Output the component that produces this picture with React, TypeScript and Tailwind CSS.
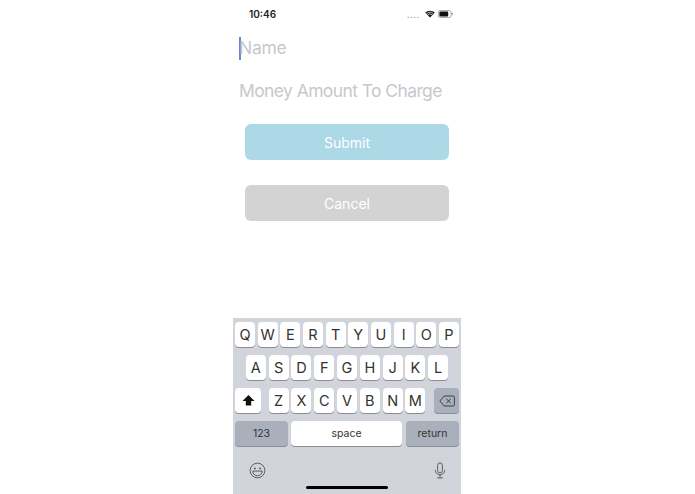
import React from "react";

function Key({ c }: { c: string }) {
  return (
    <div className="w-[20px] h-[25px] bg-white rounded-[4px] shadow-[0_1px_0_#8a8d94] flex items-center justify-center text-[14.5px] text-[#333] shrink-0">
      {c}
    </div>
  );
}

export default function App() {
  return (
    <div className="w-[695px] h-[494px] bg-white overflow-hidden flex justify-center font-['Inter','Liberation_Sans',sans-serif]">
      <div className="w-[228px] h-[494px] flex flex-col ml-[-1px]">
        <div className="h-[28px] flex items-center justify-between pl-[16px] pr-[8px]">
          <span className="text-[10px] font-semibold text-[#222]">10:46</span>
          <div className="flex items-center gap-[3px]">
            <span className="text-[7px] leading-none text-[#999] tracking-[0.9px] mt-[2px] font-bold mr-[2px]">....</span>
            <svg width="10" height="8" viewBox="0 0 10 8">
              <path d="M5 7.6 L0.2 2.6 A7 7 0 0 1 9.8 2.6 Z" fill="#111" />
              <path d="M1.8 3.4 A5 5 0 0 1 8.2 3.4" stroke="#fff" strokeWidth="0.7" fill="none" />
              <path d="M3 4.8 A3 3 0 0 1 7 4.8" stroke="#fff" strokeWidth="0.7" fill="none" />
            </svg>
            <svg width="15" height="8" viewBox="0 0 15 8">
              <rect x="0.4" y="0.5" width="12.6" height="7" rx="1.8" stroke="#888" strokeWidth="0.7" fill="none" />
              <rect x="1.4" y="1.5" width="8.8" height="5" rx="1" fill="#111" />
              <rect x="13.6" y="2.8" width="1" height="2.4" rx="0.5" fill="#888" />
            </svg>
          </div>
        </div>

        <div className="h-[42px] flex items-center pl-[6px] mt-[-1px]">
          <div className="w-[1.5px] h-[23px] bg-[#6f83d6] mt-[1px]"></div>
          <span className="text-[17.5px] tracking-[-0.3px] text-[#c8c8cc] ml-[-1.5px] mt-[1px]">Name</span>
        </div>
        <div className="h-[42px] flex items-center pl-[6px] mt-[1px]">
          <span className="text-[17.5px] tracking-[-0.6px] text-[#c8c8cc] whitespace-nowrap mt-[1px]">Money Amount To Charge</span>
        </div>

        <div className="mt-[12px] flex flex-col gap-[25px] px-[12px]">
          <div className="h-[36px] w-[204px] rounded-[6px] bg-[#add8e6] flex items-center justify-center text-white text-[14px]">Submit</div>
          <div className="h-[36px] w-[204px] rounded-[6px] bg-[#d3d3d3] flex items-center justify-center text-white text-[14px]">Cancel</div>
        </div>

        <div className="flex-1"></div>

        <div className="h-[176px] bg-[#d1d4da] flex flex-col pt-[4px] px-[2px] relative">
          <div className="flex justify-between">
            {"QWERTYUIOP".split("").map((c) => <Key key={c} c={c} />)}
          </div>
          <div className="flex justify-center gap-[2.8px] mt-[8px]">
            {"ASDFGHJKL".split("").map((c) => <Key key={c} c={c} />)}
          </div>
          <div className="flex justify-between mt-[8px]">
            <div className="w-[26px] h-[25px] bg-white rounded-[4px] shadow-[0_1px_0_#8a8d94] flex items-center justify-center">
              <svg width="13" height="13" viewBox="0 0 13 13">
                <path d="M6.5 1 L12.5 7 H9.2 V11.5 H3.8 V7 H0.5 Z" fill="#111" />
              </svg>
            </div>
            <div className="flex gap-[2.8px] ml-[-1px]">
              {"ZXCVBNM".split("").map((c) => <Key key={c} c={c} />)}
            </div>
            <div className="w-[25px] h-[25px] bg-[#aab0bb] rounded-[4px] shadow-[0_1px_0_#8a8d94] flex items-center justify-center">
              <svg width="16" height="12" viewBox="0 0 16 12" fill="none" stroke="#333" strokeWidth="0.9">
                <path d="M5.2 1 H14 A1.4 1.4 0 0 1 15.4 2.4 V9.6 A1.4 1.4 0 0 1 14 11 H5.2 L0.8 6 Z" />
                <path d="M7.4 3.8 L11.8 8.2 M11.8 3.8 L7.4 8.2" />
              </svg>
            </div>
          </div>
          <div className="flex justify-between mt-[8px]">
            <div className="w-[53px] h-[25px] bg-[#aab0bb] rounded-[4px] shadow-[0_1px_0_#8a8d94] flex items-center justify-center text-[10.5px] text-[#333]">123</div>
            <div className="w-[111px] h-[25px] bg-white rounded-[4px] shadow-[0_1px_0_#8a8d94] flex items-center justify-center text-[10.5px] text-[#333] ml-[-1px]">space</div>
            <div className="w-[53px] h-[25px] bg-[#aab0bb] rounded-[4px] shadow-[0_1px_0_#8a8d94] flex items-center justify-center text-[10.5px] text-[#333]">return</div>
          </div>
          <div className="flex justify-between items-center pl-[14px] pr-[13px] mt-[16px]">
            <svg width="17" height="17" viewBox="0 0 18 18" fill="none" stroke="#555" strokeWidth="1">
              <circle cx="9" cy="9" r="7.8" />
              <circle cx="6.3" cy="6.8" r="1" fill="#555" stroke="none" />
              <circle cx="11.7" cy="6.8" r="1" fill="#555" stroke="none" />
              <path d="M4 9.6 H14 A5 5 0 0 1 4 9.6 Z" />
            </svg>
            <svg width="12" height="17" viewBox="0 0 12 18" fill="none" stroke="#555" strokeWidth="1">
              <rect x="3.5" y="1" width="5" height="10.5" rx="2.5" />
              <path d="M1 8.5 A5 5 0 0 0 11 8.5 M6 13.5 V16.5 M3 16.8 H9" />
            </svg>
          </div>
          <div className="absolute left-[73px] bottom-[5px] w-[82px] h-[3px] rounded-full bg-black"></div>
        </div>
      </div>
    </div>
  );
}
